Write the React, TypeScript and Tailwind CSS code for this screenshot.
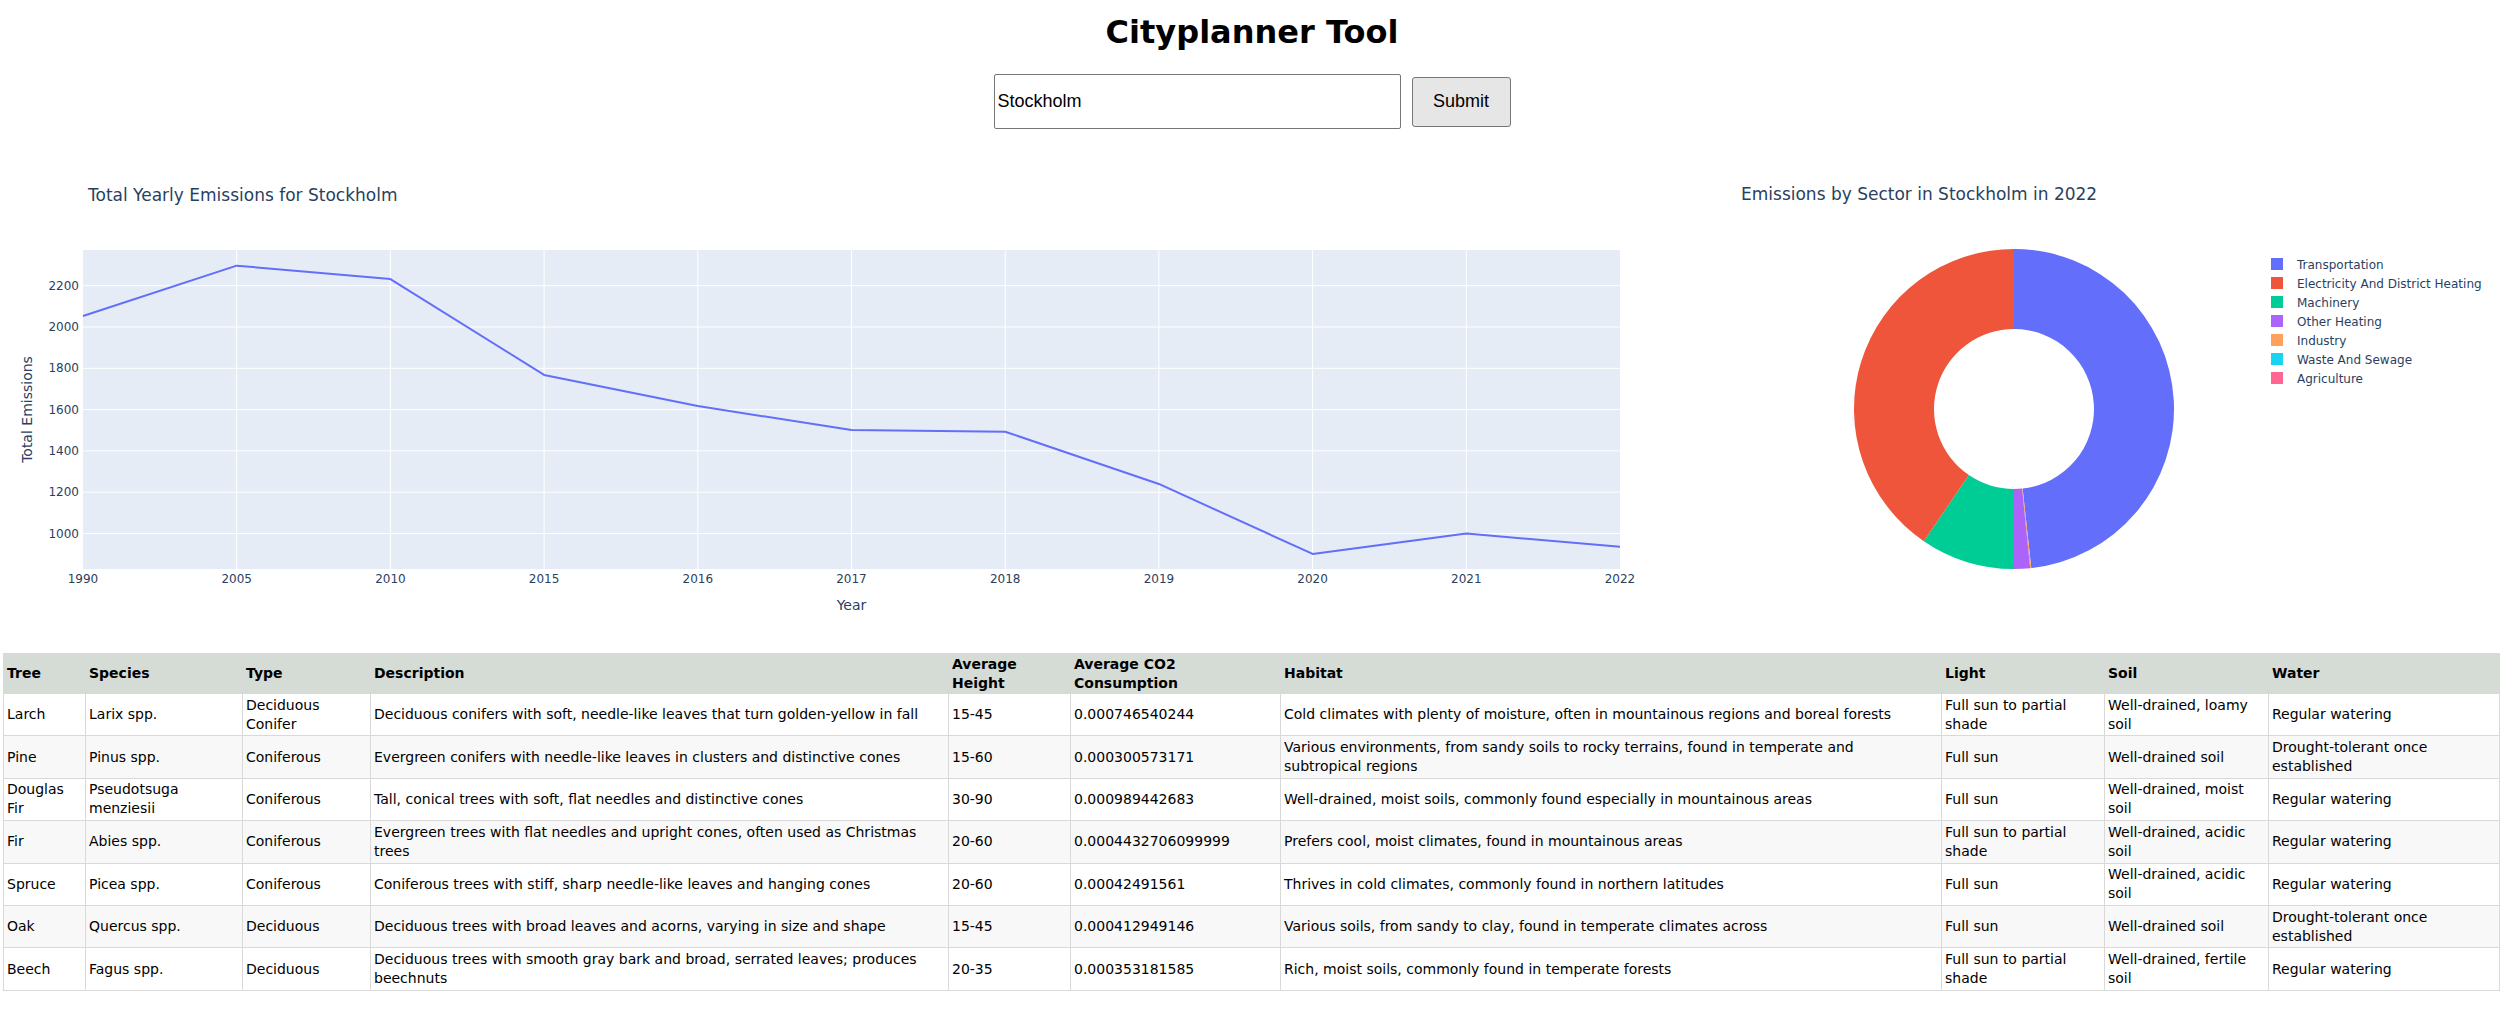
const FONT = '"DejaVu Sans", Verdana, sans-serif';
const INK = '#2a3f5f';

const years = ['1990', '2005', '2010', '2015', '2016', '2017', '2018', '2019', '2020', '2021', '2022'];
const totals = [2053, 2297, 2232, 1768, 1617, 1501, 1493, 1240, 901, 1000, 936];

function LineChart() {
  const left = 83;
  const right = 1620;
  const top = 100;
  const bottom = 419;
  const step = (right - left) / 10;
  const y = (v: number) => 177 - (v - 2000) * 0.2065;
  const ticks = [1000, 1200, 1400, 1600, 1800, 2000, 2200];
  const pts = totals.map((v, i) => `${left + i * step},${y(v)}`).join(' ');

  return (
    <svg width={1669} height={490} className="block shrink-0" fontFamily={FONT}>
      <text x={88} y={51} fontSize={17} fill={INK}>
        Total Yearly Emissions for Stockholm
      </text>
      <rect x={left} y={top} width={right - left} height={bottom - top} fill="#e5ecf6" />
      {ticks.map((t) => (
        <line key={t} x1={left} x2={right} y1={y(t)} y2={y(t)} stroke="#fff" strokeWidth={1} />
      ))}
      {years.slice(1, -1).map((yr, i) => (
        <line key={yr} x1={left + (i + 1) * step} x2={left + (i + 1) * step} y1={top} y2={bottom} stroke="#fff" strokeWidth={1} />
      ))}
      <polyline points={pts} fill="none" stroke="#636efa" strokeWidth={2} strokeLinejoin="round" />
      {ticks.map((t) => (
        <text key={t} x={79} y={y(t) + 4} fontSize={12} fill={INK} textAnchor="end">
          {t}
        </text>
      ))}
      {years.map((yr, i) => (
        <text key={yr} x={left + i * step} y={433} fontSize={12} fill={INK} textAnchor="middle">
          {yr}
        </text>
      ))}
      <text x={851.5} y={460} fontSize={14} fill={INK} textAnchor="middle">
        Year
      </text>
      <text transform="translate(32,259.5) rotate(-90)" fontSize={14} fill={INK} textAnchor="middle">
        Total Emissions
      </text>
    </svg>
  );
}

const sectors = [
  { name: 'Transportation', color: '#636efa' },
  { name: 'Electricity And District Heating', color: '#ef553b' },
  { name: 'Machinery', color: '#00cc96' },
  { name: 'Other Heating', color: '#ab63fa' },
  { name: 'Industry', color: '#ffa15a' },
  { name: 'Waste And Sewage', color: '#19d3f3' },
  { name: 'Agriculture', color: '#ff6692' },
];

// start/end angles, clockwise from 12 o'clock
const slices = [
  { color: '#636efa', a0: 0, a1: 173.8 },
  { color: '#ffa15a', a0: 173.8, a1: 174.2 },
  { color: '#ab63fa', a0: 174.2, a1: 180 },
  { color: '#00cc96', a0: 180, a1: 214.3 },
  { color: '#ef553b', a0: 214.3, a1: 360 },
];

function sector(cx: number, cy: number, R: number, r: number, a0: number, a1: number) {
  const p = (a: number, rad: number) => {
    const t = (a * Math.PI) / 180;
    return `${cx + rad * Math.sin(t)},${cy - rad * Math.cos(t)}`;
  };
  const large = a1 - a0 > 180 ? 1 : 0;
  return `M${p(a0, R)} A${R},${R} 0 ${large} 1 ${p(a1, R)} L${p(a1, r)} A${r},${r} 0 ${large} 0 ${p(a0, r)} Z`;
}

function PieChart() {
  return (
    <svg width={835} height={490} className="block shrink-0" fontFamily={FONT}>
      <text x={72} y={50} fontSize={17} fill={INK}>
        Emissions by Sector in Stockholm in 2022
      </text>
      {slices.map((s) => (
        <path key={s.color} d={sector(345, 259, 160, 80, s.a0, s.a1)} fill={s.color} />
      ))}
      {sectors.map((s, i) => (
        <g key={s.name}>
          <rect x={602} y={108 + i * 19} width={12} height={12} fill={s.color} />
          <text x={628} y={118.5 + i * 19} fontSize={12} fill={INK}>
            {s.name}
          </text>
        </g>
      ))}
    </svg>
  );
}

const cols = [
  { h: 'Tree', w: 82 },
  { h: 'Species', w: 157 },
  { h: 'Type', w: 128 },
  { h: 'Description', w: 578 },
  { h: 'Average\nHeight', w: 122 },
  { h: 'Average CO2\nConsumption', w: 210 },
  { h: 'Habitat', w: 661 },
  { h: 'Light', w: 163 },
  { h: 'Soil', w: 164 },
  { h: 'Water', w: 231 },
];

const rows = [
  ['Larch', 'Larix spp.', 'Deciduous\nConifer', 'Deciduous conifers with soft, needle-like leaves that turn golden-yellow in fall', '15-45', '0.000746540244', 'Cold climates with plenty of moisture, often in mountainous regions and boreal forests', 'Full sun to partial\nshade', 'Well-drained, loamy\nsoil', 'Regular watering'],
  ['Pine', 'Pinus spp.', 'Coniferous', 'Evergreen conifers with needle-like leaves in clusters and distinctive cones', '15-60', '0.000300573171', 'Various environments, from sandy soils to rocky terrains, found in temperate and\nsubtropical regions', 'Full sun', 'Well-drained soil', 'Drought-tolerant once\nestablished'],
  ['Douglas\nFir', 'Pseudotsuga\nmenziesii', 'Coniferous', 'Tall, conical trees with soft, flat needles and distinctive cones', '30-90', '0.000989442683', 'Well-drained, moist soils, commonly found especially in mountainous areas', 'Full sun', 'Well-drained, moist\nsoil', 'Regular watering'],
  ['Fir', 'Abies spp.', 'Coniferous', 'Evergreen trees with flat needles and upright cones, often used as Christmas\ntrees', '20-60', '0.0004432706099999', 'Prefers cool, moist climates, found in mountainous areas', 'Full sun to partial\nshade', 'Well-drained, acidic\nsoil', 'Regular watering'],
  ['Spruce', 'Picea spp.', 'Coniferous', 'Coniferous trees with stiff, sharp needle-like leaves and hanging cones', '20-60', '0.00042491561', 'Thrives in cold climates, commonly found in northern latitudes', 'Full sun', 'Well-drained, acidic\nsoil', 'Regular watering'],
  ['Oak', 'Quercus spp.', 'Deciduous', 'Deciduous trees with broad leaves and acorns, varying in size and shape', '15-45', '0.000412949146', 'Various soils, from sandy to clay, found in temperate climates across', 'Full sun', 'Well-drained soil', 'Drought-tolerant once\nestablished'],
  ['Beech', 'Fagus spp.', 'Deciduous', 'Deciduous trees with smooth gray bark and broad, serrated leaves; produces\nbeechnuts', '20-35', '0.000353181585', 'Rich, moist soils, commonly found in temperate forests', 'Full sun to partial\nshade', 'Well-drained, fertile\nsoil', 'Regular watering'],
];

function Lines({ text }: { text: string }) {
  const parts = text.split('\n');
  return (
    <>
      {parts.map((p, i) => (
        <span key={i} className="block whitespace-nowrap">
          {p}
        </span>
      ))}
    </>
  );
}

function TreeTable() {
  return (
    <table className="ml-[3px] w-[2496px] table-fixed border-collapse text-[14px] leading-[19px] text-black" style={{ fontFamily: FONT }}>
      <colgroup>
        {cols.map((c) => (
          <col key={c.h} style={{ width: c.w }} />
        ))}
      </colgroup>
      <thead>
        <tr className="bg-[#d4dcd5]">
          {cols.map((c) => (
            <th key={c.h} className="h-[40px] border border-[#d9d9d9] px-[3px] text-left align-middle font-bold">
              <Lines text={c.h} />
            </th>
          ))}
        </tr>
      </thead>
      <tbody>
        {rows.map((r, ri) => (
          <tr key={r[0]} className={ri % 2 === 1 ? 'bg-[#f8f8f8]' : 'bg-white'}>
            {r.map((cell, ci) => (
              <td key={ci} className="h-[42.4px] border border-[#d9d9d9] px-[3px] py-0 align-middle">
                <Lines text={cell} />
              </td>
            ))}
          </tr>
        ))}
      </tbody>
    </table>
  );
}

export default function App() {
  return (
    <div className="min-h-[1034px] w-[2504px] bg-white">
      <h1 className="mt-[12px] text-center text-[32px] leading-[40px] font-bold text-black" style={{ fontFamily: FONT }}>
        Cityplanner Tool
      </h1>
      <div className="mt-[22px] flex items-center justify-center gap-[11px]" style={{ fontFamily: '"Liberation Sans", Arial, sans-serif' }}>
        <input
          defaultValue="Stockholm"
          className="h-[55px] w-[407px] rounded-[2px] border border-[#767676] bg-white px-[3px] text-[18px] text-black outline-none"
        />
        <button className="h-[50px] w-[99px] rounded-[3px] border border-[#767676] bg-[#e6e6e6] text-[18px] text-black">
          Submit
        </button>
      </div>
      <div className="mt-[21px] flex">
        <LineChart />
        <PieChart />
      </div>
      <div className="mt-[13px]">
        <TreeTable />
      </div>
    </div>
  );
}
